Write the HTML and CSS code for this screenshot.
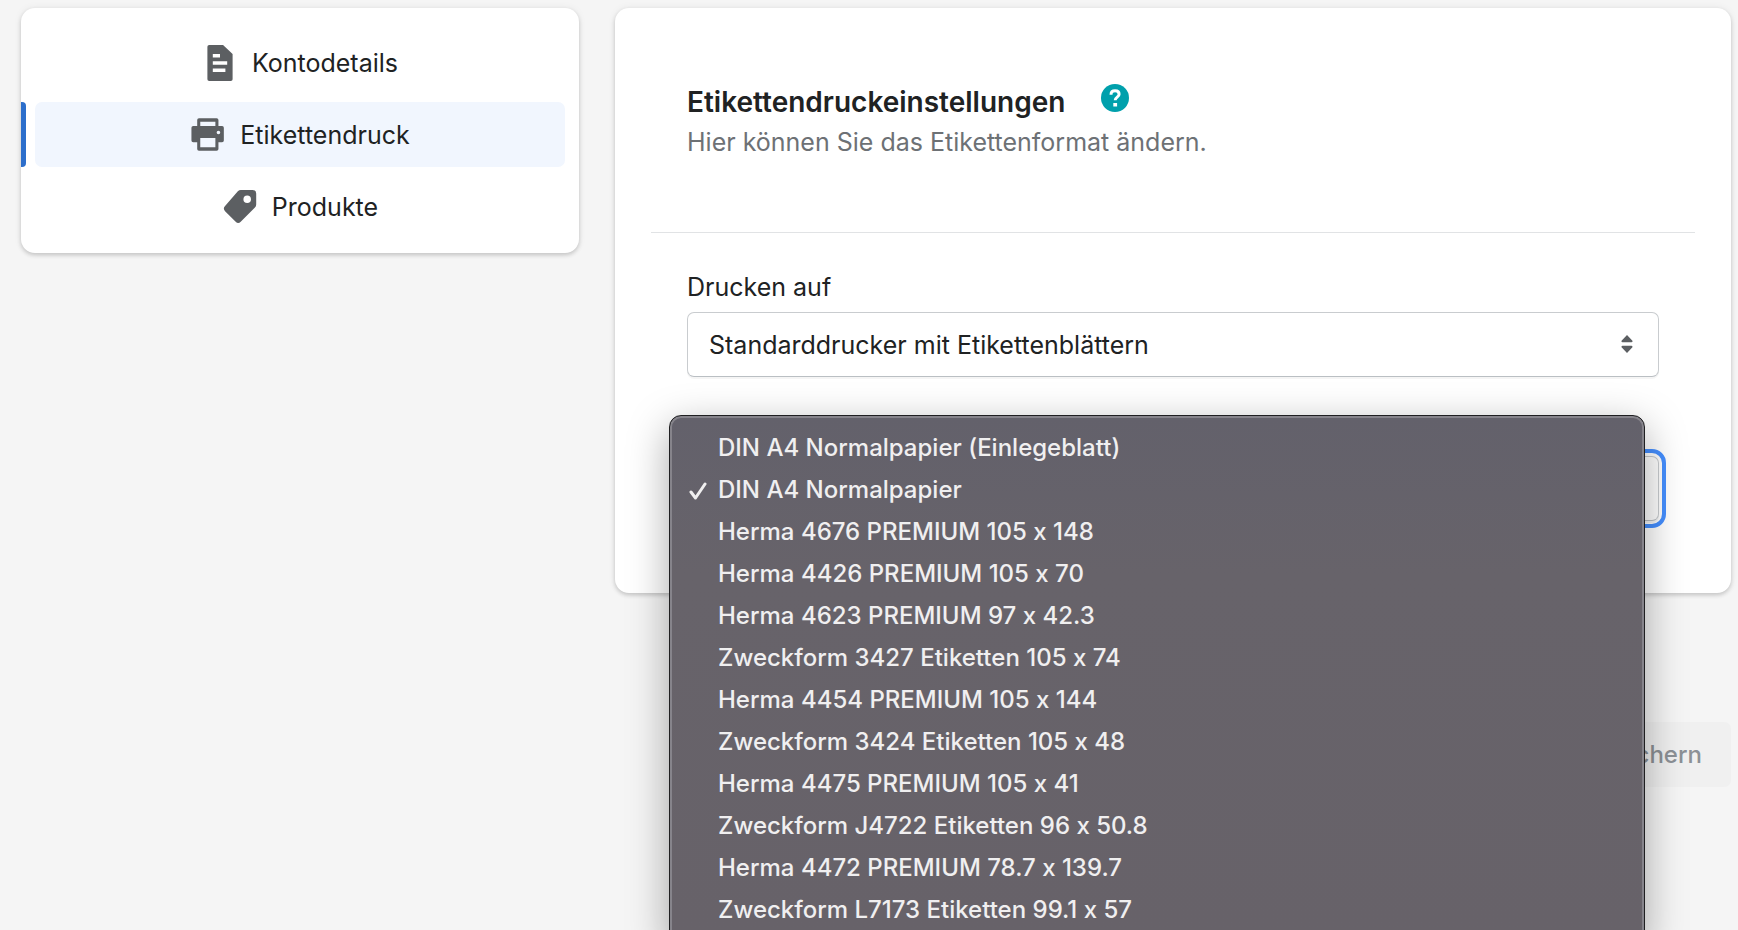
FILE: index.html
```html
<!DOCTYPE html>
<html lang="de">
<head>
  <meta charset="UTF-8">
  <meta name="viewport" content="width=device-width, initial-scale=1.0">
  <title>Etikettendruckeinstellungen</title>
  <link rel="stylesheet" href="styles.css">
</head>
<body>
  <div class="layout">
    <nav class="card sidebar">
      <a class="nav-item" href="#konto">
        <svg class="icon" viewBox="0 0 20 20"><path fill-rule="evenodd" d="M4 0h7.700L17 5v14a1 1 0 0 1-1 1H4a1 1 0 0 1-1-1V1a1 1 0 0 1 1-1zm2 5v2h4V5H6zm0 4v2h8V9H6zm0 4v2h7v-2H6z"/></svg>
        Kontodetails
      </a>
      <a class="nav-item active" href="#etikettendruck">
        <svg class="icon" viewBox="0 0 20 20"><path fill-rule="evenodd" d="M5 .7h9.800a1 1 0 0 1 1 1V5h2a1 1 0 0 1 1 1v7a1 1 0 0 1-1 1h-2v3.800a1 1 0 0 1-1 1H5a1 1 0 0 1-1-1V14H1.800a1 1 0 0 1-1-1V6a1 1 0 0 1 1-1H4V1.700a1 1 0 0 1 1-1zm.7 2V5h8.400V2.700H5.700zm0 9v5.100h8.400v-5.100H5.700zm10.100-4.100a1 1 0 1 0 0 2 1 1 0 0 0 0-2z"/></svg>
        Etikettendruck
      </a>
      <a class="nav-item" href="#produkte">
        <svg class="icon" viewBox="0 0 20 20"><path fill-rule="evenodd" d="M10.500.5H17a2 2 0 0 1 2 2v6a2.500 2.500 0 0 1-.7 1.800l-7.900 7.900a2 2 0 0 1-2.800 0l-5.900-5.900a2 2 0 0 1 0-2.800l7.100-8.300A2.500 2.500 0 0 1 10.500.5zM14 3.600a2.100 2.100 0 1 0 0 4.200 2.100 2.100 0 0 0 0-4.200z"/></svg>
        Produkte
      </a>
    </nav>

    <main>
      <form id="printForm">
        <div class="card">
          <div class="header">
            <h2>
              Etikettendruckeinstellungen
              <svg class="help" viewBox="0 0 28 28"><circle cx="14" cy="14" r="14"/><path d="M10 10.700c0-2.500 1.800-3.900 4.100-3.900 2.400 0 4 1.400 4 3.400 0 3-3.900 2.800-3.900 6"/><rect x="12.300" y="19" width="3.800" height="3.500"/></svg>
            </h2>
            <p>Hier können Sie das Etikettenformat ändern.</p>
          </div>
          <div class="fields">
            <div class="field">
              <label for="printer">Drucken auf</label>
              <div class="select-box">
                <select id="printer" name="printer">
                  <option>Standarddrucker mit Etikettenblättern</option>
                </select>
                <svg class="arrows" viewBox="0 0 20 20"><path d="M10 5l2.900 3c.4.400.1 1-.4 1h-5c-.5 0-.8-.6-.4-1zM10 15l2.900-3c.4-.4.1-1-.4-1h-5c-.5 0-.8.600-.4 1z"/></svg>
              </div>
            </div>
            <div class="field open">
              <label for="format">Format</label>
              <div class="select-box">
                <select id="format" name="format">
                  <option>DIN A4 Normalpapier</option>
                </select>
              </div>
              <ul class="menu" role="listbox" aria-label="Format">
                <li role="option">DIN A4 Normalpapier (Einlegeblatt)</li>
                <li role="option" aria-selected="true"><svg class="check" viewBox="0 0 18 18"><path d="M2 10l4.500 6L16 2"/></svg>DIN A4 Normalpapier</li>
                <li role="option">Herma 4676 PREMIUM 105 x 148</li>
                <li role="option">Herma 4426 PREMIUM 105 x 70</li>
                <li role="option">Herma 4623 PREMIUM 97 x 42.3</li>
                <li role="option">Zweckform 3427 Etiketten 105 x 74</li>
                <li role="option">Herma 4454 PREMIUM 105 x 144</li>
                <li role="option">Zweckform 3424 Etiketten 105 x 48</li>
                <li role="option">Herma 4475 PREMIUM 105 x 41</li>
                <li role="option">Zweckform J4722 Etiketten 96 x 50.8</li>
                <li role="option">Herma 4472 PREMIUM 78.7 x 139.7</li>
                <li role="option">Zweckform L7173 Etiketten 99.1 x 57</li>
              </ul>
            </div>
          </div>
        </div>
        <div class="actions">
          <button type="submit" disabled>Speichern</button>
        </div>
      </form>
    </main>
  </div>
</body>
</html>
```
FILE: styles.css
```css
* { box-sizing: border-box; }
body { font-family: Inter, "Liberation Sans", sans-serif; font-size: 25px; line-height: 36px; font-variant-ligatures: no-contextual; background: #f5f5f5; color: #202223; margin: 0; height: 100vh; overflow: hidden; }
h2, p, ul { margin: 0; padding: 0; }

.layout { display: grid; grid-template-columns: 1fr 2fr; gap: 36px; align-items: start; padding: 8px 7px 8px 21px; }
.card { background: #fff; border-radius: 14px; box-shadow: 0 0 9px rgba(23, 24, 24, 0.06), 0 2px 4px rgba(0, 0, 0, 0.18); }

/* Navigation */
.sidebar { display: flex; flex-direction: column; gap: 7px; padding: 22px 14px 14px; }
.nav-item { position: relative; display: flex; align-items: center; justify-content: center; gap: 14px; height: 65px; border-radius: 7px; color: #202223; text-decoration: none; }
.nav-item.active { background: #f1f6fe; }
.nav-item.active::before { content: ""; position: absolute; left: -14px; top: 0; bottom: 0; width: 5px; background: #2c6ecb; border-radius: 0 4px 4px 0; }
.icon { width: 36px; height: 36px; fill: #5c5f62; }

/* Content */
.header { margin: 0 36px; padding: 72px 36px; border-bottom: 1px solid #e1e3e5; }
.header h2 { display: flex; align-items: baseline; gap: 36px; font-size: 28px; line-height: 44px; font-weight: 600; }
.header p { color: #6d7175; }
.help { width: 28px; height: 28px; fill: #00a0ac; }
.help path { fill: none; stroke: #fff; stroke-width: 3; }
.help rect { fill: #fff; }

.fields { display: flex; flex-direction: column; gap: 36px; padding: 36px 72px 72px; }
.field { position: relative; }
.field label { display: block; margin-bottom: 7px; }
.select-box { position: relative; }
select { display: block; width: 100%; height: 65px; padding: 0 60px 0 21px; appearance: none; font: inherit; color: inherit; background: #fff; border: 1px solid #c9cccf; border-bottom-color: #babfc3; border-radius: 7px; box-shadow: 0 2px 0 rgba(0, 0, 0, 0.04); }
.open label { visibility: hidden; }
.open select { outline: 4px solid #458fff; outline-offset: 3px; }
.arrows { position: absolute; right: 14px; top: 14px; width: 36px; height: 36px; fill: #5c5f62; pointer-events: none; }

/* Open list, lies over the card */
.menu { position: absolute; z-index: 1; left: -18px; right: 14px; top: 2px; padding: 11px 0; list-style: none; font-size: 24px; color: #f0eff0; font-weight: 500; background: linear-gradient(#63616b, #67636a 30%, #676269); border: 1px solid #1f1f21; border-radius: 12px; box-shadow: inset 0 0 0 2px #86848b, 0 12px 40px rgba(0, 0, 0, 0.34); }
.menu li { position: relative; line-height: 42px; padding-left: 48px; }
.check { position: absolute; left: 19px; top: 13px; width: 18px; height: 18px; fill: none; stroke: #f0eff0; stroke-width: 3; stroke-linecap: round; stroke-linejoin: round; }

.actions { display: flex; justify-content: flex-end; margin-top: 129px; }
button { height: 65px; padding: 0 29px; font: inherit; font-size: 24px; font-weight: 500; color: #8c9196; background: #f0f0f0; border: none; border-radius: 7px; }
```
